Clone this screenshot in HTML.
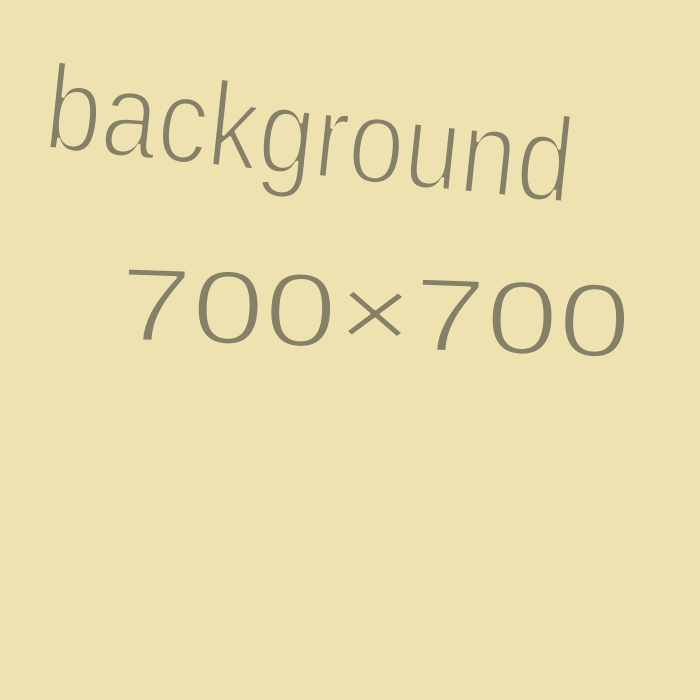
<!DOCTYPE html>
<html><head><meta charset="utf-8"><style>
html,body{margin:0;padding:0;width:700px;height:700px;overflow:hidden;background:#eee3b0;}
svg{display:block}
</style></head><body>
<svg width="700" height="700" viewBox="0 0 700 700" xmlns="http://www.w3.org/2000/svg">
<rect width="700" height="700" fill="#eee3b0"/>
<g font-family="Liberation Sans, sans-serif" fill="#858068" stroke="#eee3b0" stroke-linejoin="round">
<text x="42" y="148" font-size="122" stroke-width="4" transform="rotate(6 42 148)" textLength="530" lengthAdjust="spacingAndGlyphs">background</text>
<text x="118" y="340" font-size="105" stroke-width="3" transform="rotate(2 118 340)" textLength="512" lengthAdjust="spacingAndGlyphs">700×700</text>
</g>
</svg>
</body></html>
